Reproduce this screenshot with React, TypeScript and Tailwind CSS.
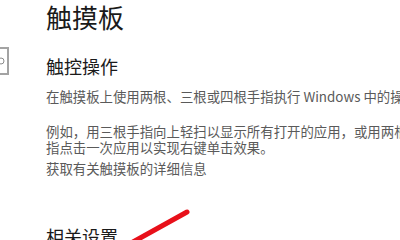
export default function App() {
  return (
    <div
      className="relative w-[400px] h-[240px] overflow-hidden bg-white flex"
      style={{ fontFamily: '"Noto Sans CJK SC", "Noto Sans", sans-serif' }}
    >
      {/* 左侧导航（搜索框只露出一点） */}
      <aside className="w-[46px] shrink-0 overflow-hidden pt-[47px]">
        <div className="w-[200px] h-[28px] ml-[-191px] border-2 border-[#a3a3a3] flex items-center justify-end pr-[1px]">
          <svg width="10" height="10" viewBox="0 0 10 10" fill="none" stroke="#8a8a8a" strokeWidth="1">
            <circle cx="5" cy="5" r="3" />
            <path d="M2.8 7.2 L0.5 9.5" />
          </svg>
        </div>
      </aside>

      {/* 主内容 */}
      <main className="flex-1 min-w-0 whitespace-nowrap">
        <h1 className="text-[26px] leading-[34px] text-[#1a1a1a]">触摸板</h1>

        <h2 className="mt-[20px] text-[18px] leading-[24px] text-[#1a1a1a]">触控操作</h2>
        <p className="mt-[10px] text-[13.4px] leading-[16px] text-[#5a5a5a]">
          在触摸板上使用两根、三根或四根手指执行 Windows 中的操作。
        </p>

        <p className="mt-[19px] text-[13.4px] leading-[16px] text-[#5a5a5a]">
          例如，用三根手指向上轻扫以显示所有打开的应用，或用两根手
          <br />
          指点击一次应用以实现右键单击效果。
        </p>
        <p className="mt-[5px] text-[13.4px] leading-[16px] text-[#5a5a5a]">获取有关触摸板的详细信息</p>

        <h2 className="mt-[48px] text-[18px] leading-[24px] text-[#1a1a1a]">相关设置</h2>
      </main>

      {/* 红色标注线 */}
      <svg className="absolute left-0 top-0 pointer-events-none" width="400" height="240">
        <line x1="133" y1="242" x2="187" y2="212" stroke="#e8101a" strokeWidth="5" strokeLinecap="round" />
      </svg>
    </div>
  );
}
